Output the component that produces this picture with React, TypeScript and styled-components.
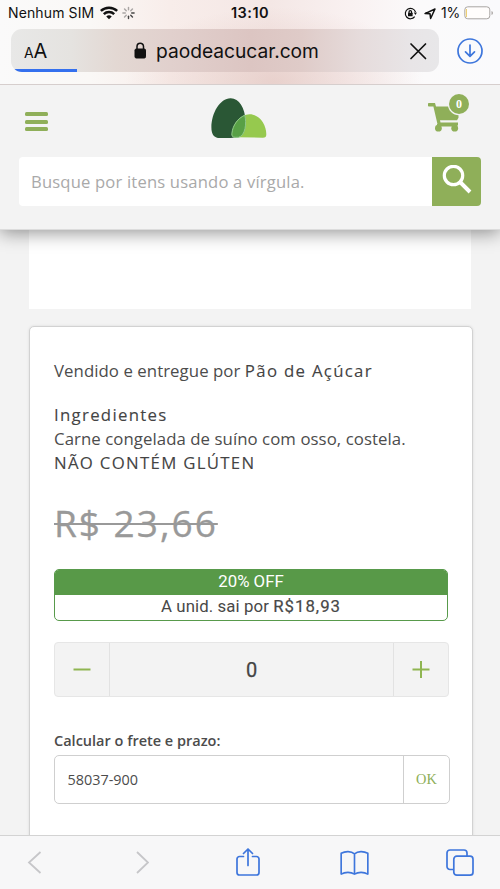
import React from "react";
import styled, { createGlobalStyle } from "styled-components";

const GlobalStyle = createGlobalStyle`
  *, *::before, *::after { box-sizing: border-box; }
  html, body { margin: 0; height: 100%; overflow: hidden; }
  body { background: #f3f3f3; color: #4c4c4c; font-family: "Open Sans", sans-serif; }
  button, input { margin: 0; padding: 0; border: 0; background: none; font: inherit; color: inherit; outline: 0; }
  svg { display: block; flex: none; }
`;

const Phone = styled.div`
  width: 500px;
  height: 889px;
  display: flex;
  flex-direction: column;
  overflow: hidden;
`;

const BrowserTop = styled.header`
  position: relative;
  z-index: 2;
  flex: none;
  height: 85px;
  border-bottom: 1px solid #d6cecd;
  color: #111;
  font-family: Inter, sans-serif;
  background:
    radial-gradient(ellipse 150px 75px at 275px 82px, rgba(216, 178, 170, 0.42), transparent),
    linear-gradient(90deg, #fafafa 0, #faf8f6 90px, #f8edea 170px, #f4e7e5 270px, #f9f1f1 350px, #fbfafb 420px, #fafafc 500px);
`;

const StatusBar = styled.div`
  height: 29px;
  padding: 0 6px 3px 8px;
  display: grid;
  grid-template-columns: 1fr auto 1fr;
  align-items: center;
  font-size: 14px;
  line-height: 16px;
`;

const StatusGroup = styled.div<{ $end?: boolean }>`
  display: flex;
  align-items: center;
  justify-content: ${(p) => (p.$end ? "flex-end" : "flex-start")};
`;

const Carrier = styled.span`
  width: 92px;
  letter-spacing: 0.12px;
  white-space: nowrap;
`;

const Clock = styled.span`
  padding-right: 2px;
  font-weight: 600;
  font-size: 14.5px;
  letter-spacing: 0.5px;
`;

const Percent = styled.span`
  margin: 0 3px 0 5px;
  width: 20px;
  letter-spacing: -0.3px;
`;

const AddressRow = styled.div`
  display: flex;
  align-items: center;
  gap: 18px;
  padding: 0 17px 0 11px;
`;

const AddressBar = styled.div`
  position: relative;
  width: 428px;
  height: 43px;
  border-radius: 11px;
  overflow: hidden;
  display: grid;
  grid-template-columns: 111px 1fr auto;
  align-items: center;
  padding: 0 12px;
  background: linear-gradient(90deg, #e8e8e7 0, #e5e3e0 60px, #e3d8d3 105px, #e1d0cd 160px, #dcc5c2 240px, #dfcbc8 290px, #e6dcdc 350px, #e8e5e7 400px, #e8e7e9 428px);
`;

const LoadProgress = styled.i`
  position: absolute;
  left: 0;
  bottom: 0;
  width: 66px;
  height: 3px;
  background: #3470ee;
`;

const TextSize = styled.span`
  display: flex;
  align-items: baseline;
  padding: 3px 0 0 1px;
  font-size: 20px;
  line-height: 24px;
  letter-spacing: -0.2px;
  small { font-size: 14px; }
`;

const Host = styled.span`
  display: flex;
  align-items: center;
  gap: 9px;
  font-size: 19.2px;
  letter-spacing: -0.02px;
`;

const SiteHeader = styled.section`
  position: relative;
  z-index: 1;
  flex: none;
  height: 145px;
  background: #f3f3f3;
  border-bottom: 1px solid #dcdcdc;
  box-shadow: 0 3px 17px rgba(0, 0, 0, 0.42);
`;

const BrandRow = styled.div`
  height: 72px;
  display: grid;
  grid-template-columns: 186px 1fr auto;
  padding: 0 31px 0 25px;
`;

const MenuButton = styled.button`
  width: 24px;
  height: 19px;
  margin-top: 27px;
  display: flex;
  flex-direction: column;
  justify-content: space-between;
`;

const MenuLine = styled.span`
  width: 23px;
  height: 4px;
  border-radius: 1.5px;
  background: #8faf59;
`;

const Logo = styled.svg`
  margin-top: 12px;
`;

const CartButton = styled.button`
  position: relative;
  width: 42px;
  height: 40px;
  margin-top: 9px;
`;

const CartBadge = styled.span`
  position: absolute;
  top: 0;
  right: 0;
  width: 20px;
  height: 20px;
  border-radius: 50%;
  background: #8faf59;
  color: #fff;
  font: bold 12px/20px "Liberation Serif", serif;
  text-align: center;
`;

const SearchForm = styled.div`
  display: flex;
  height: 49px;
  margin: 0 19px;
  border-radius: 4px;
  overflow: hidden;
`;

const SearchInput = styled.input`
  flex: 1;
  min-width: 0;
  padding: 0 12px 1px;
  background: #fff;
  font-size: 16.6px;
  letter-spacing: 0.18px;
  &::placeholder { color: #a9a9a9; opacity: 1; }
`;

const SearchButton = styled.button`
  width: 49px;
  padding-bottom: 3px;
  background: #8faf59;
  color: #fff;
  display: grid;
  place-items: center;
`;

const Content = styled.main`
  flex: 1;
  min-height: 0;
  overflow: hidden;
  background: #f3f3f3;
`;

const Gallery = styled.div`
  height: 79px;
  margin: 0 29px;
  background: #fff;
`;

const Card = styled.article`
  width: 444px;
  height: 540px;
  margin: 17px 0 0 29px;
  padding: 32px 23px 0 24px;
  background: #fff;
  border: 1px solid #d2d2d2;
  border-radius: 5px;
  box-shadow: 0 0 3px rgba(0, 0, 0, 0.1);
`;

const Line = styled.p`
  margin: 0;
  font-size: 16.8px;
  line-height: 24px;
  letter-spacing: 0.06px;
  white-space: nowrap;
`;

const Strong = styled.strong`
  font-weight: 500;
  color: #444;
  letter-spacing: 1.3px;
  -webkit-text-stroke: 0.1px currentColor;
`;

const Ingredients = styled.section`
  margin-top: 20px;
`;

const OldPrice = styled.div`
  width: max-content;
  margin-top: 23px;
  font-size: 37px;
  line-height: 50px;
  letter-spacing: 2px;
  color: #999;
  -webkit-text-stroke: 0.3px currentColor;
  text-decoration: line-through;
  text-decoration-thickness: 2px;
`;

const Offer = styled.section`
  height: 52px;
  width: 394px;
  margin-top: 21px;
  border: 1px solid #589a4b;
  border-radius: 5px;
  overflow: hidden;
  font: 16.8px/23px Roboto, sans-serif;
  text-align: center;
`;

const OfferTitle = styled.div`
  height: 25px;
  background: #589948;
  color: #fff;
`;

const OfferText = styled.div`
  letter-spacing: 0.1px;
  color: #484848;
  b { font-weight: 400; letter-spacing: 1px; -webkit-text-stroke: 0.2px currentColor; }
`;

const Quantity = styled.div`
  width: 395px;
  height: 55px;
  margin-top: 21px;
  display: grid;
  grid-template-columns: 54px 1fr 54px;
  border: 1px solid #e6e6e6;
  border-radius: 4px;
  background: #f3f3f3;
`;

const Step = styled.button`
  display: grid;
  place-items: center;
  color: #8fb551;
`;

const Count = styled.span`
  display: grid;
  place-items: center;
  border: solid #e2e2e2;
  border-width: 0 1px;
  font: 400 20px Roboto, sans-serif;
  -webkit-text-stroke: 0.25px currentColor;
  color: #444;
`;

const ShippingLabel = styled.label`
  display: block;
  margin-top: 34px;
  font-size: 14.5px;
  font-weight: 600;
  line-height: 20px;
`;

const ShippingField = styled.div`
  width: 396px;
  height: 49px;
  margin-top: 4px;
  display: flex;
  border: 1px solid #cfcfcf;
  border-radius: 5px;
`;

const PostalCode = styled.input`
  flex: 1;
  min-width: 0;
  padding: 0 12.5px;
  font-size: 14.4px;
`;

const OkButton = styled.button`
  width: 46px;
  border-left: 1px solid #cfcfcf;
  color: #8faf59;
  font: 14.4px "Liberation Serif", serif;
`;

const BrowserToolbar = styled.nav`
  position: relative;
  z-index: 1;
  flex: none;
  height: 54px;
  padding: 0 26px 0 21px;
  display: flex;
  align-items: center;
  justify-content: space-between;
  background: #f7f7f8;
  border-top: 1px solid #d3d3d3;
`;

const NavButton = styled.button<{ $muted?: boolean }>`
  width: 28px;
  display: grid;
  place-items: center;
  color: ${(p) => (p.$muted ? "#c6c6c9" : "#3e76dc")};
`;

const spokes = Array.from({ length: 8 }, (_, i) => i);

export default function App() {
  return (
    <Phone>
      <GlobalStyle />
      <BrowserTop>
        <StatusBar>
          <StatusGroup>
            <Carrier>Nenhum SIM</Carrier>
            <svg width="18" height="14" viewBox="0 0 17 13" fill="none" stroke="#111" strokeWidth="2.3">
              <path d="M.8 4.6a11 11 0 0 1 15.4 0M3.6 7.6a7 7 0 0 1 9.8 0" />
              <path d="M8.5 12.5 5.9 9.9a3.8 3.8 0 0 1 5.2 0Z" fill="#111" stroke="none" />
            </svg>
            <svg width="21" height="14" viewBox="0 0 21 14" stroke="#333" strokeWidth="1.4" strokeLinecap="round">
              {spokes.map((i) => (
                <path key={i} d="M10.500 3.800V1.400" opacity={i > 1 && i < 5 ? 0.9 : 0.4} transform={`rotate(${i * 45} 10.5 7)`} />
              ))}
            </svg>
          </StatusGroup>
          <Clock>13:10</Clock>
          <StatusGroup $end>
            <svg width="13" height="13" viewBox="0 0 13 13" fill="none" stroke="#111" strokeWidth="1.2">
              <path d="M10.7 9.7A5.2 5.2 0 1 1 11.5 5" />
              <path d="m9.8 5.5 3.1-.1-1.4 2.7Z" fill="#111" stroke="none" />
              <path d="M5 6V4.9a1.3 1.3 0 0 1 2.6 0V6" />
              <rect x="4" y="5.8" width="4.6" height="3.4" rx=".5" fill="#111" stroke="none" />
            </svg>
            <svg width="19" height="13" viewBox="0 0 19 13" fill="none" stroke="#111" strokeWidth="1.5" strokeLinejoin="round">
              <path d="M8 6.6 18 2l-4.400 9.500-.6-4.800Z" />
            </svg>
            <Percent>1%</Percent>
            <svg width="30" height="14" viewBox="0 0 30 14" fill="none">
              <rect x=".8" y=".8" width="25" height="12" rx="3" fill="#fffdfc" stroke="#a9a5a3" />
              <path d="M2.4 3v8" stroke="#edcf74" strokeWidth="1.2" />
              <path d="M27.5 5c2 .7 2 3.3 0 4Z" fill="#a9a5a3" />
            </svg>
          </StatusGroup>
        </StatusBar>
        <AddressRow>
          <AddressBar>
            <TextSize><small>A</small>A</TextSize>
            <Host>
              <svg width="13" height="17" viewBox="0 0 13 17" fill="none" stroke="#111" strokeWidth="1.5">
                <rect x="1" y="7" width="10.5" height="9" rx="1.2" fill="#111" stroke="#111" strokeWidth="1" />
                <path d="M3 7.5V4.4a3.25 3.25 0 0 1 6.5 0v3.1" />
              </svg>
              paodeacucar.com
            </Host>
            <svg width="18" height="18" viewBox="0 0 18 18" stroke="#111" strokeWidth="1.7" strokeLinecap="round">
              <path d="m2 2 14.500 14.500M16.500 2 2 16.500" />
            </svg>
            <LoadProgress />
          </AddressBar>
          <svg width="26" height="26" viewBox="0 0 26 26" fill="none" stroke="#3e76dc" strokeWidth="1.7" strokeLinecap="round" strokeLinejoin="round">
            <circle cx="13" cy="13" r="12" />
            <path d="M13 7v11M8.500 13.800l4.500 4.500 4.500-4.500" />
          </svg>
        </AddressRow>
      </BrowserTop>

      <SiteHeader>
        <BrandRow>
          <MenuButton aria-label="Menu"><MenuLine /><MenuLine /><MenuLine /></MenuButton>
          <Logo width="56" height="42" viewBox="0 0 56 42">
            <path d="M19.500 1.200C28 1 34 11 34.500 23c.3 7-1.500 16.500-8 17.200-5 .8-14 1-19.500.7C2.500 40.300.4 36.500.4 30.500.4 16 9 1.200 19.500 1.200Z" fill="#2a5735" />
            <path d="M38.500 17.200C48 17 55.500 27 55.300 37.500c0 2.600-1.200 3.300-3.800 3.200L25 40.300c-3.200 0-4.500-1-4.100-4.100C22 26 29.500 17.400 38.500 17.200Z" fill="#96c94e" />
            <path d="M33.800 18.200C35.700 26 34.500 38.500 27.500 40.300H24.500c-3 0-4-1.200-3.600-4.100.9-8 6-15 12.900-18Z" fill="#58a046" stroke="#8ec78a" strokeWidth="1" />
          </Logo>
          <CartButton aria-label="Carrinho">
            <svg width="42" height="40" viewBox="0 0 42 40" fill="#8faf59">
              <path d="M1.800 9H8l1 3.500h22.500v11.200l-1.500 2.500H13l.5 2.300H31v3H10.800L6.400 12.500H1.800A.8.8 0 0 1 1 11.700V9.800A.8.8 0 0 1 1.800 9Z" />
              <circle cx="11.400" cy="34.200" r="3.400" />
              <circle cx="27.700" cy="34.200" r="3.400" />
              <path d="M10 30h20v2.500H10Z" />
              <circle cx="32" cy="10" r="11.200" fill="#f3f3f3" />
            </svg>
            <CartBadge>0</CartBadge>
          </CartButton>
        </BrandRow>
        <SearchForm>
          <SearchInput placeholder="Busque por itens usando a vírgula." />
          <SearchButton aria-label="Buscar">
            <svg width="30" height="30" viewBox="0 0 30 30" fill="none" stroke="currentColor" strokeWidth="3.200">
              <circle cx="11.500" cy="10.500" r="9.200" />
              <path d="m18 17 10 10" strokeWidth="3.900" />
            </svg>
          </SearchButton>
        </SearchForm>
      </SiteHeader>

      <Content>
        <Gallery />
        <Card>
          <Line>Vendido e entregue por <Strong>Pão de Açúcar</Strong></Line>
          <Ingredients>
            <Line><Strong>Ingredientes</Strong></Line>
            <Line>Carne congelada de suíno com osso, costela.</Line>
            <Line><Strong>NÃO CONTÉM GLÚTEN</Strong></Line>
          </Ingredients>
          <OldPrice>R$ 23,66</OldPrice>
          <Offer>
            <OfferTitle>20% OFF</OfferTitle>
            <OfferText>A unid. sai por <b>R$18,93</b></OfferText>
          </Offer>
          <Quantity>
            <Step aria-label="Diminuir">
              <svg width="18" height="18" viewBox="0 0 18 18" stroke="currentColor" strokeWidth="2"><path d="M.5 8.500h17" /></svg>
            </Step>
            <Count>0</Count>
            <Step aria-label="Aumentar">
              <svg width="18" height="18" viewBox="0 0 18 18" stroke="currentColor" strokeWidth="2"><path d="M.5 8.500h17M9 0v17" /></svg>
            </Step>
          </Quantity>
          <ShippingLabel htmlFor="cep">Calcular o frete e prazo:</ShippingLabel>
          <ShippingField>
            <PostalCode id="cep" defaultValue="58037-900" />
            <OkButton>OK</OkButton>
          </ShippingField>
        </Card>
      </Content>

      <BrowserToolbar>
        <NavButton $muted aria-label="Voltar">
          <svg width="16" height="24" viewBox="0 0 16 24" fill="none" stroke="currentColor" strokeWidth="1.800"><path d="M13.500 1 2 11.500 13.500 22" /></svg>
        </NavButton>
        <NavButton $muted aria-label="Avançar">
          <svg width="16" height="24" viewBox="0 0 16 24" fill="none" stroke="currentColor" strokeWidth="1.800"><path d="M4 1l11 10.500L4 22" /></svg>
        </NavButton>
        <NavButton aria-label="Compartilhar">
          <svg width="26" height="30" viewBox="0 0 26 30" fill="none" stroke="currentColor" strokeWidth="1.700" strokeLinecap="round" strokeLinejoin="round">
            <path d="M8.500 8.500H4.500A2.500 2.500 0 0 0 2 11v13.500a2.500 2.500 0 0 0 2.500 2.500h17a2.500 2.500 0 0 0 2.500-2.500V11a2.500 2.500 0 0 0-2.500-2.500h-4M13 17.500V1M8.500 5.500 13 1l4.500 4.500" />
          </svg>
        </NavButton>
        <NavButton aria-label="Favoritos">
          <svg width="29" height="26" viewBox="0 0 30 26" fill="none" stroke="currentColor" strokeWidth="1.700" strokeLinejoin="round">
            <path d="M15 3.500v21M15 3.500C11.500.5 5.500.5 1.200 3v21.500c4-2.500 10-2.500 13.800 0 3.800-2.500 9.800-2.500 13.800 0V3C24.500.5 18.500.5 15 3.500Z" />
          </svg>
        </NavButton>
        <NavButton aria-label="Abas">
          <svg width="28" height="28" viewBox="0 0 28 28" fill="none" stroke="currentColor" strokeWidth="1.700" strokeLinejoin="round">
            <path d="M7.500 20.500H4A3 3 0 0 1 1 17.500V4a3 3 0 0 1 3-3h14a3 3 0 0 1 3 3v3" />
            <rect x="7.800" y="7.200" width="19.200" height="19" rx="3" />
          </svg>
        </NavButton>
      </BrowserToolbar>
    </Phone>
  );
}
